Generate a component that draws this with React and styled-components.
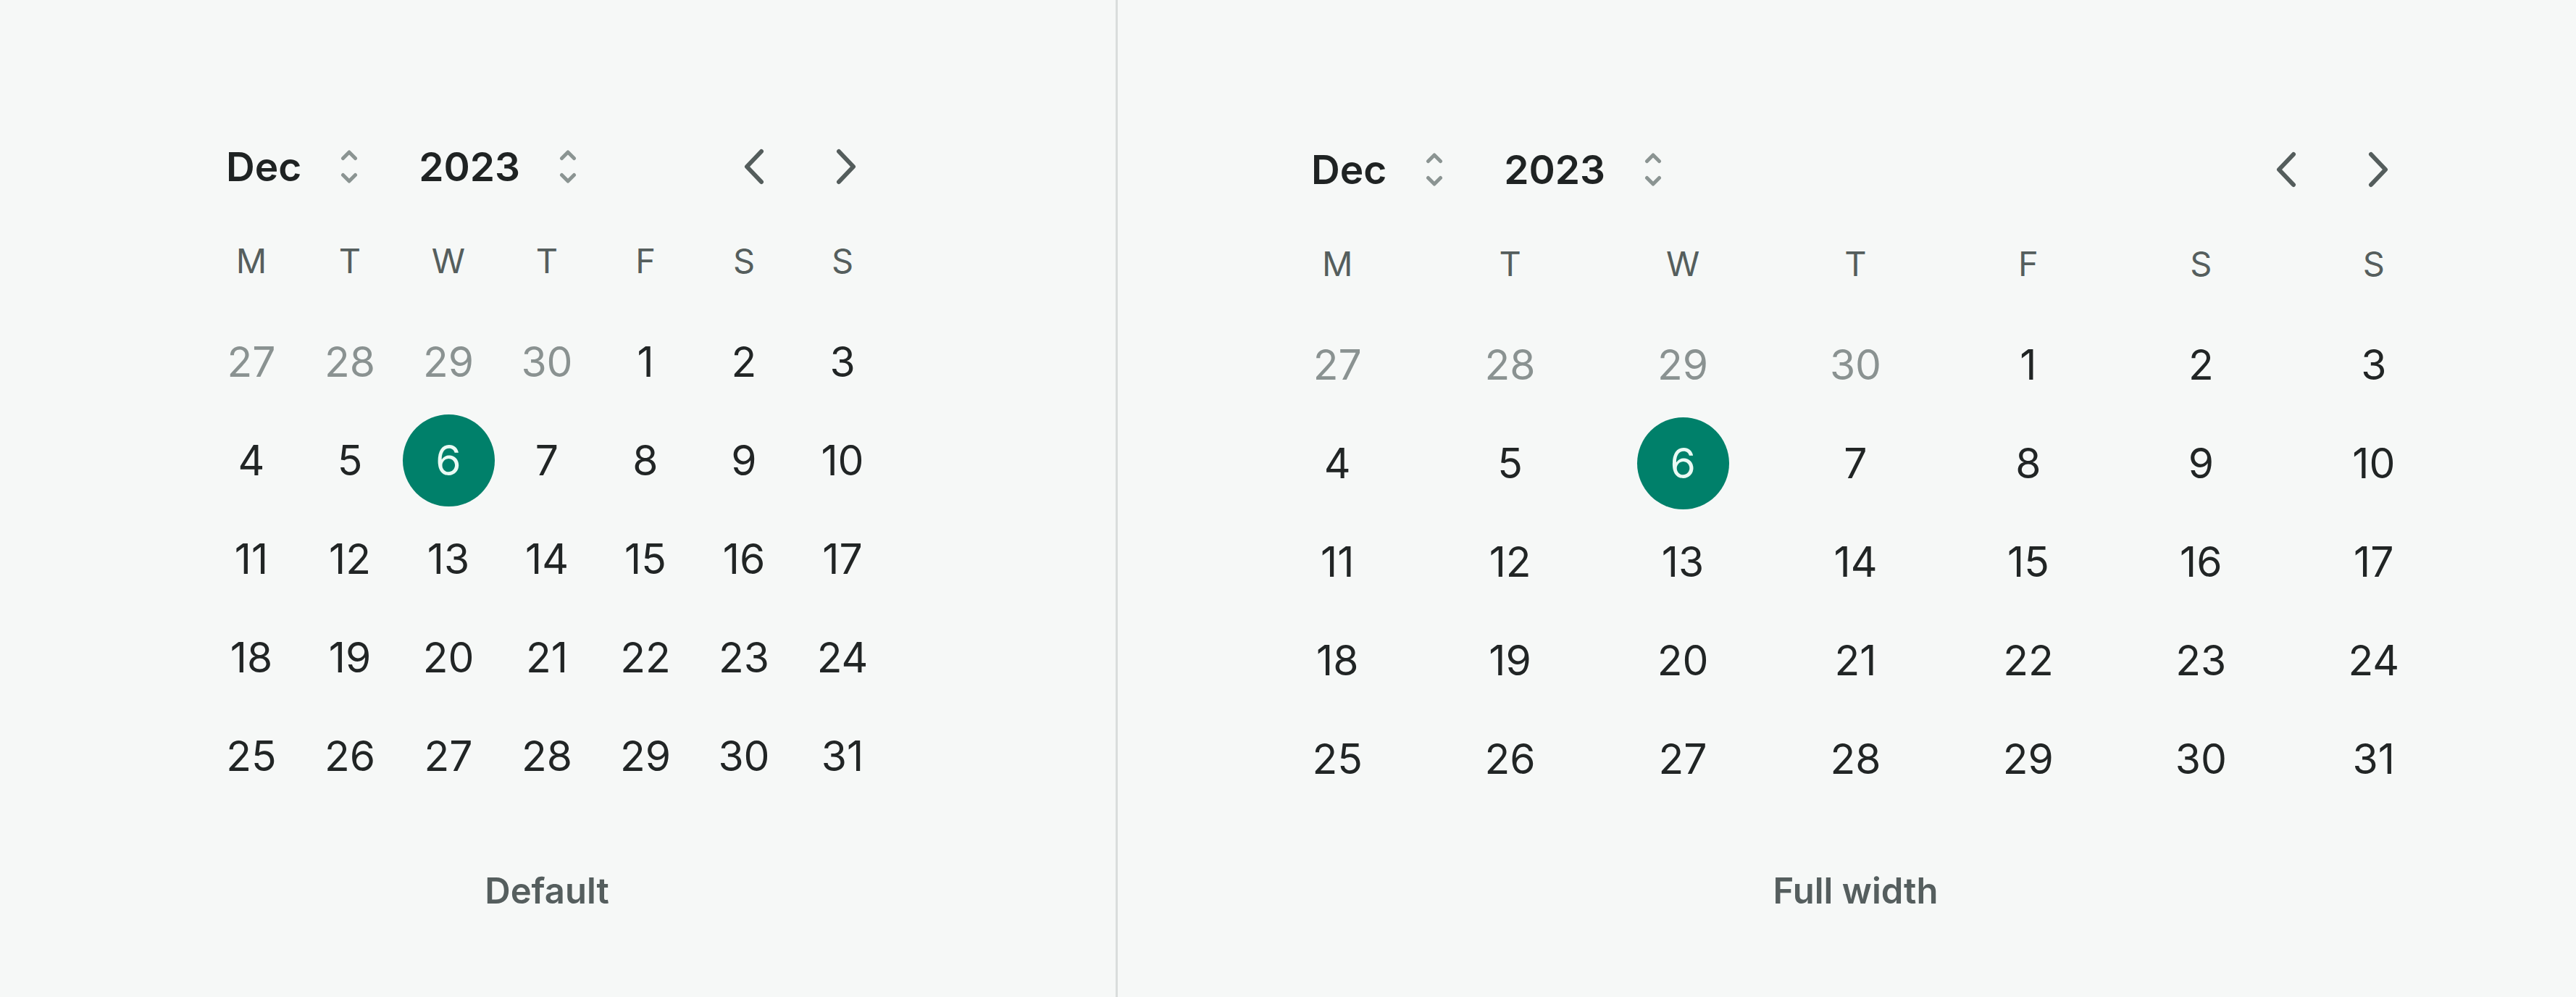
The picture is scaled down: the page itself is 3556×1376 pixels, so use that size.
import React from 'react'
import styled, { createGlobalStyle } from 'styled-components'

const GlobalStyle = createGlobalStyle`
  html, body {
    margin: 0;
    padding: 0;
    background: #f6f8f7;
    font-family: Inter, "Noto Sans", sans-serif;
  }
`

const Page = styled.div`
  display: flex;
  width: 3556px;
  height: 1376px;
  background: #f6f8f7;
  overflow: hidden;
`

const Panel = styled.section`
  box-sizing: border-box;
  display: flex;
  flex-direction: column;
  padding: ${({ $top }) => $top}px ${({ $right }) => $right}px 0 ${({ $left }) => $left}px;
  ${({ $width }) => ($width ? `width: ${$width}px; flex: none;` : 'flex: 1;')}
  ${({ $divider }) => ($divider ? 'border-right: 3px solid #d9dddc;' : '')}
`

const Calendar = styled.div`
  display: flex;
  flex-direction: column;
  width: 100%;
`

const Header = styled.div`
  display: flex;
  align-items: center;
  justify-content: space-between;
  height: 96px;
  padding: 0 ${({ $padRight }) => $padRight}px 0 ${({ $padLeft }) => $padLeft}px;
`

const Selects = styled.div`
  display: flex;
  align-items: center;
  gap: 84px;
`

const Select = styled.button`
  display: flex;
  align-items: center;
  gap: 54px;
  border: 0;
  padding: 0;
  background: none;
  font-family: Inter, sans-serif;
  font-size: 55px;
  font-weight: 600;
  line-height: 66px;
  color: #1f2323;
  cursor: pointer;
`

const Nav = styled.div`
  display: flex;
  align-items: center;
  gap: 95px;
`

const NavButton = styled.button`
  display: flex;
  border: 0;
  padding: 0;
  background: none;
  color: #545d5c;
  cursor: pointer;
`

const Weekdays = styled.div`
  display: grid;
  grid-template-columns: repeat(7, 1fr);
  height: 80px;
  margin-top: 42px;
  align-items: center;
`

const Weekday = styled.div`
  text-align: center;
  font-size: 47px;
  line-height: 56px;
  color: #555e5d;
`

const Days = styled.div`
  display: grid;
  grid-template-columns: repeat(7, 1fr);
  grid-auto-rows: 136px;
  margin-top: 31px;
`

const Day = styled.div`
  display: flex;
  align-items: center;
  justify-content: center;
`

const DayNumber = styled.span`
  display: flex;
  align-items: center;
  justify-content: center;
  width: 127px;
  height: 127px;
  border-radius: 50%;
  font-size: 57px;
  line-height: 1;
  color: ${({ $muted, $selected }) => ($selected ? '#eafaf4' : $muted ? '#8a9291' : '#212525')};
  background: ${({ $selected }) => ($selected ? '#00806a' : 'transparent')};
`

const Caption = styled.div`
  margin-top: ${({ $gap }) => $gap}px;
  text-align: center;
  font-size: 49px;
  font-weight: 600;
  line-height: 60px;
  color: #555e5e;
`

const UpDown = () => (
  <svg width="24" height="48" viewBox="0 0 24 48" fill="none" stroke="#8b9492" strokeWidth="5" strokeLinecap="round" strokeLinejoin="round">
    <path d="M3.5 12.5 L12 4 L20.5 12.5" />
    <path d="M3.5 35.5 L12 44 L20.5 35.5" />
  </svg>
)

const Chevron = ({ dir }) => (
  <svg width="32" height="52" viewBox="0 0 32 52" fill="none" stroke="currentColor" strokeWidth="6" strokeLinecap="round" strokeLinejoin="round">
    <path d={dir === 'left' ? 'M26 5 L6 26 L26 47' : 'M6 5 L26 26 L6 47'} />
  </svg>
)

const weekdays = ['M', 'T', 'W', 'T', 'F', 'S', 'S']
const days = [
  ...[27, 28, 29, 30].map((d) => ({ d, muted: true })),
  ...Array.from({ length: 31 }, (_, i) => ({ d: i + 1 })),
]

const MonthCalendar = ({ padLeft, padRight }) => (
  <Calendar>
    <Header $padLeft={padLeft} $padRight={padRight}>
      <Selects>
        <Select>Dec<UpDown /></Select>
        <Select>2023<UpDown /></Select>
      </Selects>
      <Nav>
        <NavButton><Chevron dir="left" /></NavButton>
        <NavButton><Chevron dir="right" /></NavButton>
      </Nav>
    </Header>
    <Weekdays>
      {weekdays.map((w, i) => <Weekday key={i}>{w}</Weekday>)}
    </Weekdays>
    <Days>
      {days.map(({ d, muted }, i) => (
        <Day key={i}>
          <DayNumber $muted={muted} $selected={!muted && d === 6}>{d}</DayNumber>
        </Day>
      ))}
    </Days>
  </Calendar>
)

export default function App() {
  return (
    <>
      <GlobalStyle />
      <Page>
        <Panel $width={1543} $divider $top={182} $left={279} $right={309}>
          <MonthCalendar padLeft={33} padRight={47} />
          <Caption $gap={89}>Default</Caption>
        </Panel>
        <Panel $top={186} $left={184} $right={160}>
          <MonthCalendar padLeft={83} padRight={97} />
          <Caption $gap={85}>Full width</Caption>
        </Panel>
      </Page>
    </>
  )
}
